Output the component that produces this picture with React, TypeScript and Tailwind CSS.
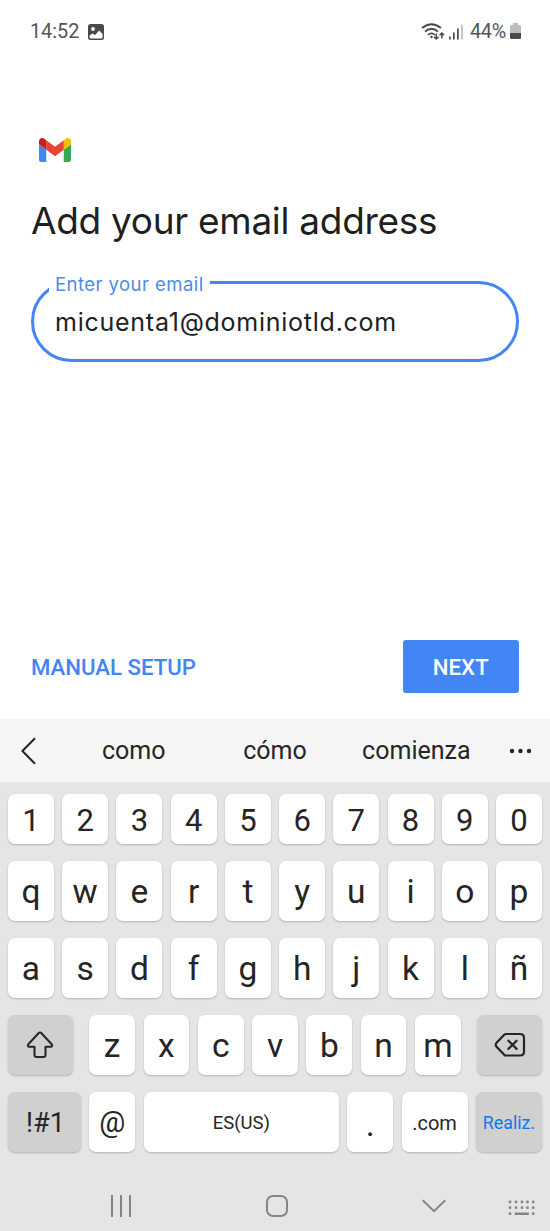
import { useState, type ReactNode } from 'react'

const SUGERENCIAS = ['como', 'cómo', 'comienza']
const NUMEROS = '1234567890'.split('')
const FILA_1 = 'qwertyuiop'.split('')
const FILA_2 = 'asdfghjklñ'.split('')
const FILA_3 = 'zxcvbnm'.split('')

// ===== Page
export default function App() {
  const [email, setEmail] = useState('micuenta1@dominiotld.com')

  const escribir = (t: string) => setEmail((prev) => prev + t)
  const borrar = () => setEmail((prev) => prev.slice(0, -1))

  return (
    <div className="flex h-[1231px] w-[550px] flex-col overflow-hidden bg-white font-[Roboto,sans-serif] text-[#252525]">
      <StatusBar />

      <main className="flex h-[656px] flex-col px-[31px] pt-[75px]">
        <GmailLogo />
        <h1 className="mt-[35px] h-[48px] font-[Inter,sans-serif] text-[37px] leading-[48px] font-normal tracking-[-0.3px] whitespace-nowrap text-[#1f1f1f]">
          Add your email address
        </h1>

        <fieldset className="mt-[27px] h-[90px] w-[488px] rounded-[41px] border-[3px] border-[#4285f4] pl-[15px]">
          <legend className="h-[20px] px-[6px] font-[Inter,sans-serif] text-[18.5px] leading-[24px] tracking-[0.45px] whitespace-nowrap text-[#4e8ae8]">
            Enter your email
          </legend>
          <input
            value={email}
            onChange={(e) => setEmail(e.target.value)}
            className="mt-[14px] ml-[6px] block h-[32px] w-[420px] bg-transparent font-[Inter,sans-serif] text-[25px] leading-[32px] tracking-[0.75px] text-[#202124] outline-none"
          />
        </fieldset>

        <div className="mt-auto mb-[26px] flex h-[53px] items-center justify-between">
          <button className="pt-[2px] text-[22.2px] font-medium whitespace-nowrap text-[#4285f4]">MANUAL SETUP</button>
          <button className="h-[53px] w-[116.5px] rounded-[3px] bg-[#4285f4] pt-[2px] text-[22.2px] font-medium text-white">
            NEXT
          </button>
        </div>
      </main>

      {/* sugerencias */}
      <div className="flex h-[63px] shrink-0 items-center bg-[#f5f5f5] pl-[19.500px]">
        <svg width="16" height="28" viewBox="0 0 16 28" fill="none" stroke="#252525" strokeWidth="2">
          <path d="M15 1.2 2.4 14 15 26.8" strokeLinejoin="round" />
        </svg>
        <div className="ml-[27.500px] grid w-[424px] grid-cols-3">
          {SUGERENCIAS.map((s) => (
            <button key={s} className="pt-px text-center text-[25px]">{s}</button>
          ))}
        </div>
        <svg width="24" height="6" viewBox="0 0 24 6" fill="#252525" className="ml-[22px]">
          <circle cx="3" cy="3" r="2.2" />
          <circle cx="11.5" cy="3" r="2.2" />
          <circle cx="20" cy="3" r="2.2" />
        </svg>
      </div>

      {/* teclado */}
      <div className="flex flex-1 flex-col bg-[#e5e5e5] px-2 pt-3">
        <div className="mb-[17px] grid grid-cols-10 gap-[8.3px]">
          {NUMEROS.map((n) => (
            <Tecla key={n} className="h-[50px] pt-[3px] text-[31px]" onClick={() => escribir(n)}>{n}</Tecla>
          ))}
        </div>
        {[FILA_1, FILA_2].map((fila, i) => (
          <div key={i} className="mb-[17px] grid grid-cols-10 gap-[8.3px]">
            {fila.map((l) => (
              <Tecla key={l} className="h-[60px] pt-px text-[33.5px]" onClick={() => escribir(l)}>{l}</Tecla>
            ))}
          </div>
        ))}
        <div className="mb-[17px] flex justify-between">
          <Tecla gris className="h-[60px] w-[64.500px]">
            <svg width="28" height="30" viewBox="0 0 28 30" fill="none" stroke="#252525" strokeWidth="2" strokeLinejoin="round">
              <path d="M12.5 3.2Q14 1.8 15.500 3.200L25.700 14.200Q27 16.700 24.500 16.700H19.500V24.700Q19.500 27 17.500 27H10.500Q8.500 27 8.500 24.700V16.700H3.500Q1 16.700 2.300 14.200Z" />
            </svg>
          </Tecla>
          <div className="flex gap-[8.5px]">
            {FILA_3.map((l) => (
              <Tecla key={l} className="h-[60px] w-[45.8px] pt-px text-[33.5px]" onClick={() => escribir(l)}>{l}</Tecla>
            ))}
          </div>
          <Tecla gris className="h-[60px] w-[64.500px]" onClick={borrar}>
            <svg width="32" height="26" viewBox="0 0 32 26" fill="none" stroke="#252525" strokeWidth="2.2" strokeLinecap="round" strokeLinejoin="round">
              <path d="M12.200 2H26Q30 2 30 6V19.500Q30 23.500 26 23.500H12.200Q11 23.500 10 22.600L2.300 14.500Q1.100 12.800 2.300 11L10 3Q11 2 12.200 2Z" />
              <path d="m14.400 8.700 8.200 8.200m0-8.200-8.200 8.200" />
            </svg>
          </Tecla>
        </div>
        <div className="flex justify-between">
          <Tecla gris className="h-[60px] w-[73px] pt-[2px] pl-[2px] text-[27px]">!#1</Tecla>
          <Tecla className="h-[60px] w-[46px] text-[29px]" onClick={() => escribir('@')}>@</Tecla>
          <Tecla className="h-[60px] w-[195px] pt-[3px] text-[18.500px]">ES(US)</Tecla>
          <Tecla className="h-[60px] w-[46px] pt-[4px] text-[34px]" onClick={() => escribir('.')}>.</Tecla>
          <Tecla className="h-[60px] w-[66px] pt-[2px] text-[20px]" onClick={() => escribir('.com')}>.com</Tecla>
          <Tecla gris className="h-[60px] w-[66px] pt-[2px] text-[17.800px] text-[#0b7aee]">Realiz.</Tecla>
        </div>

        {/* barra de navegación */}
        <div className="mt-[40px] flex h-[28px] items-center pl-[102px]">
          <svg width="22" height="22" viewBox="0 0 22 22" stroke="#858585" strokeWidth="2">
            <path d="M2 0v22M11 0v22M20 0v22" />
          </svg>
          <svg width="24" height="24" viewBox="0 0 24 24" fill="none" stroke="#858585" strokeWidth="2" className="ml-[133px]">
            <rect x="2" y="2" width="20" height="20" rx="6" />
          </svg>
          <svg width="26" height="14" viewBox="0 0 26 14" fill="none" stroke="#858585" strokeWidth="2" className="ml-[131.500px]">
            <path d="M1.700 1.200 13 12.200 24.300 1.200" />
          </svg>
          <svg width="28" height="16" viewBox="0 0 28 16" fill="#858585" className="mt-[4px] ml-[61.500px]">
            {[2, 8, 14, 19.5, 25.2].map((x) => (
              <g key={x}>
                <circle cx={x} cy="2" r="1.400" />
                <circle cx={x} cy="7.700" r="1.400" />
              </g>
            ))}
            <circle cx="2" cy="13.700" r="1.400" />
            <rect x="6.500" y="12.500" width="14.500" height="2.500" rx="1" />
            <circle cx="25.200" cy="13.700" r="1.400" />
          </svg>
        </div>
      </div>
    </div>
  )
}

function Tecla({ children, className, gris, onClick }: {
  children: ReactNode
  className: string
  gris?: boolean
  onClick?: () => void
}) {
  return (
    <button
      onClick={onClick}
      className={`flex items-center justify-center rounded-[7px] leading-none shadow-[0_1px_2px_rgba(0,0,0,0.22)] ${gris ? 'bg-[#d0d0d0]' : 'bg-white'} ${className}`}
    >
      {children}
    </button>
  )
}

function StatusBar() {
  return (
    <div className="flex h-[63px] shrink-0 items-center pr-[29px] pl-[30px] text-[19.800px] text-[#555]">
      <span>14:52</span>
      <svg width="16" height="16" viewBox="0 0 16 16" className="ml-[8.500px]">
        <rect width="16" height="16" rx="2.500" fill="#4a4a4a" />
        <circle cx="5" cy="5" r="1.900" fill="#fff" />
        <path d="M1.500 11.500 4.500 9.500 7 11 11.300 6.500 14.600 10V13Q14.600 14.600 13 14.600H3Q1.500 14.600 1.500 13Z" fill="#fff" />
      </svg>
      <div className="ml-auto flex items-center">
        <svg width="24" height="18" viewBox="0 0 24 18" fill="none" stroke="#4a4a4a" strokeWidth="1.700">
          <path d="M1 5Q10.500-2.500 20 5M4 8.500Q10.500 3 17 8.500M7 12Q10.500 8.700 14 12" />
          <circle cx="10.500" cy="14" r="1.200" fill="#4a4a4a" stroke="none" />
          <path d="M15.300 10.500V16M13 13.700l2.300 2.300 2.300-2.300M20.800 15.500V10M18.500 12.300l2.300-2.300 2.300 2.300" strokeWidth="1.500" />
        </svg>
        <svg width="15" height="16" viewBox="0 0 15 16" fill="#4a4a4a" className="ml-[4px]">
          <rect x="0" y="12.500" width="1.700" height="3" />
          <rect x="4" y="8.500" width="1.700" height="7" />
          <rect x="8" y="4.500" width="1.700" height="11" />
          <rect x="12" y="0.500" width="1.900" height="15" fill="#c4c4c4" />
        </svg>
        <span className="ml-[6px] tracking-[-0.2px]">44%</span>
        <svg width="11" height="17" viewBox="0 0 11 17" className="ml-[4px]">
          <path d="M3 0H8V2H9.500Q11 2 11 3.500V10H0V3.500Q0 2 1.500 2H3Z" fill="#bcbcbc" />
          <path d="M0 10H11V14.500Q11 16 9.500 16H1.500Q0 16 0 14.500Z" fill="#4a4a4a" />
        </svg>
      </div>
    </div>
  )
}

function GmailLogo() {
  return (
    <svg width="32" height="24" viewBox="52 42 88 66" className="ml-2">
      <path fill="#4285f4" d="M58 108h14V74L52 59v43c0 3.320 2.690 6 6 6" />
      <path fill="#34a853" d="M120 108h14c3.320 0 6-2.690 6-6V59l-20 15" />
      <path fill="#fbbc04" d="M120 48v26l20-15v-8c0-7.420-8.470-11.650-14.400-7.200" />
      <path fill="#ea4335" d="M72 74V48l24 18 24-18v26L96 92" />
      <path fill="#c5221f" d="M52 51v8l20 15V48l-5.600-4.200c-5.940-4.450-14.400-.22-14.400 7.200" />
    </svg>
  )
}
